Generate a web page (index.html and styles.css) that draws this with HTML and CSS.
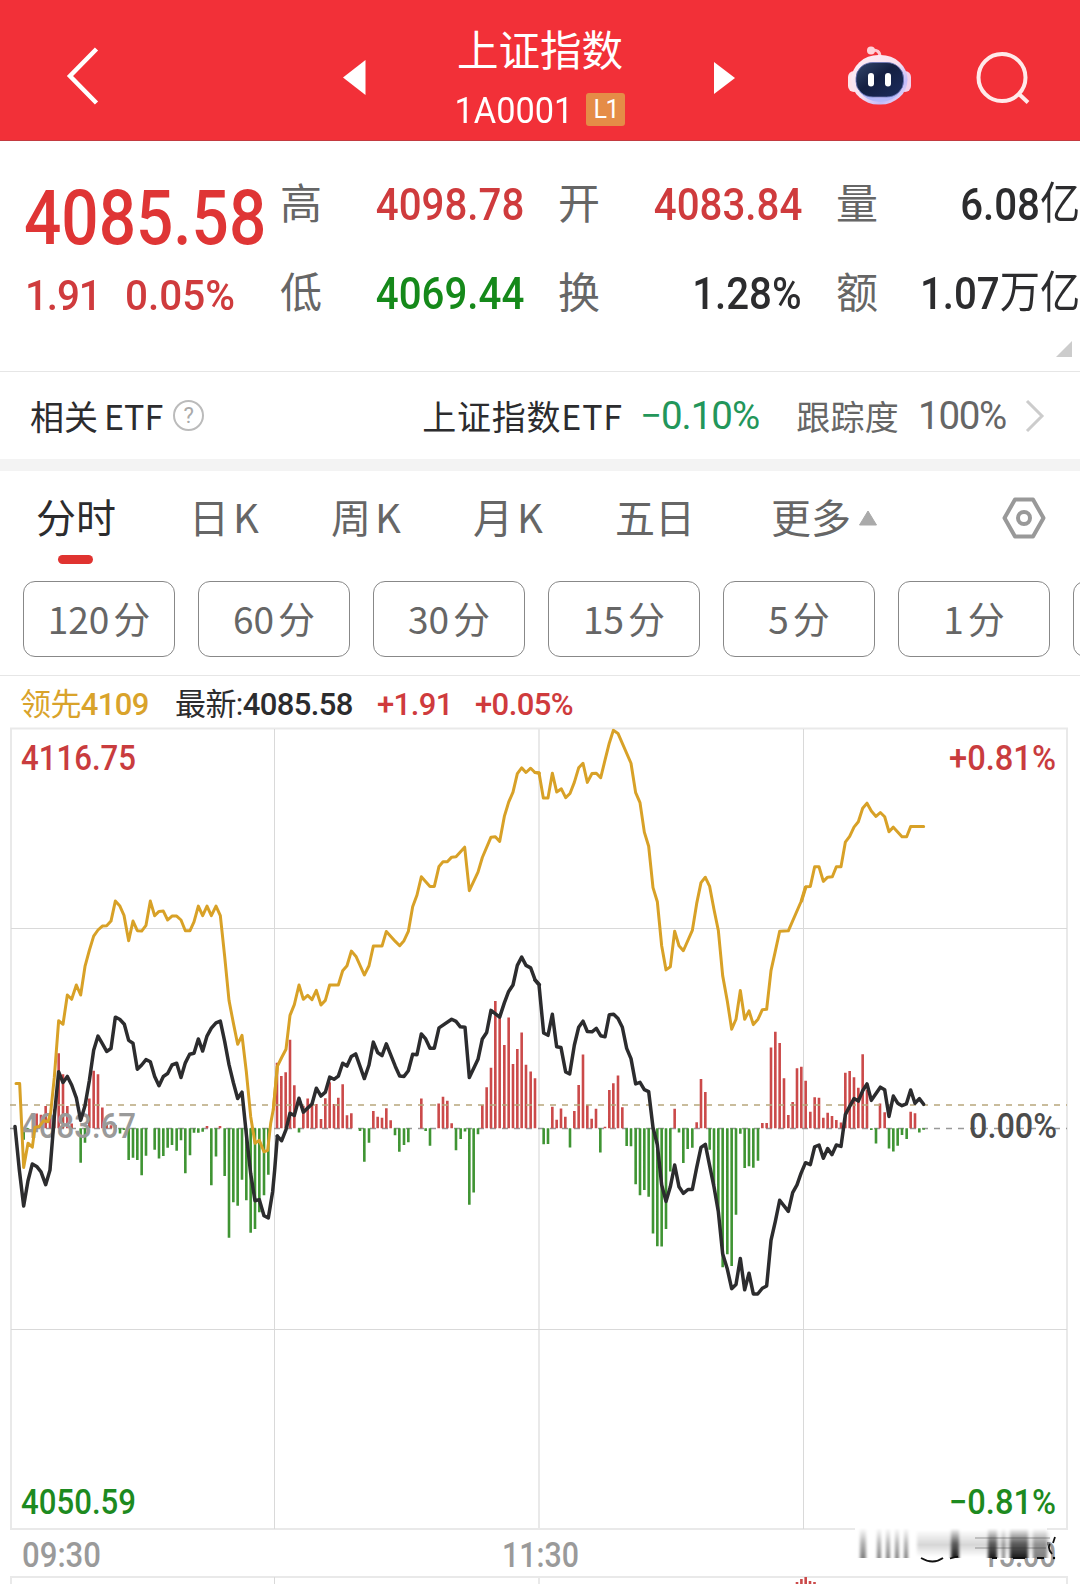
FILE: index.html
```html
<!DOCTYPE html>
<html lang="zh-CN">
<head>
<meta charset="utf-8">
<title>上证指数</title>
<link rel="stylesheet" href="styles.css">
</head>
<body>
<div class="app">
<header class="topbar">
  <svg class="back" width="36" height="60" viewBox="0 0 36 60"><path d="M30.500 3 4 30 30.500 57"/></svg>
  <svg class="prev" width="24" height="36" viewBox="0 0 24 36"><path d="M1 17.500 23.500 0V35Z"/></svg>
  <div class="heading">
    <h1>上证指数</h1>
    <div class="code"><span class="num">1A0001</span><span class="badge">L1</span></div>
  </div>
  <svg class="next" width="22" height="34" viewBox="0 0 22 34"><path d="M0 1 21 17 0 33Z"/></svg>
  <svg class="robot" width="66" height="62" viewBox="0 0 66 62">
    <defs>
      <linearGradient id="shell" x1="0" y1="0" x2="1" y2="1"><stop offset="0" stop-color="#fff0f5"/><stop offset=".5" stop-color="#f8e0ef"/><stop offset=".75" stop-color="#c3bbfa"/><stop offset="1" stop-color="#ffe6f0"/></linearGradient>
      <linearGradient id="visor" x1="0" y1="0" x2="1" y2="1"><stop offset="0" stop-color="#34486c"/><stop offset=".45" stop-color="#141f42"/><stop offset="1" stop-color="#1c2c5e"/></linearGradient>
    </defs>
    <path d="M24 5q9-1 9 7" fill="none" stroke="#ffc9d2" stroke-width="3"/>
    <circle cx="24" cy="5.500" r="4" fill="#ffd3da"/>
    <rect x="1" y="26" width="12" height="21" rx="6" fill="#ffe3ea"/>
    <rect x="52" y="26" width="12" height="21" rx="6" fill="#f3cfea"/>
    <rect x="4.500" y="10" width="56" height="49.500" rx="27" ry="24.500" fill="url(#shell)"/>
    <path d="M12 46q8 11 21 11t21-11q-9 7-21 7T12 46Z" fill="#b4b9fa"/>
    <rect x="9" y="17.500" width="47.500" height="34.500" rx="17" ry="15.500" fill="url(#visor)" stroke="#6a74b8" stroke-width=".8"/>
    <rect x="21" y="28" width="6" height="13.500" rx="3" fill="#fff"/>
    <rect x="38" y="28" width="6" height="13.500" rx="3" fill="#fff"/>
  </svg>
  <svg class="search" width="56" height="56" viewBox="0 0 56 56"><circle cx="27" cy="26.500" r="23.500"/><path d="M44 43 53 51.500"/></svg>
</header>

<section class="quote">
  <div class="price">
    <div class="last num up">4085.58</div>
    <div class="change num up"><span>1.91</span><span>0.05%</span></div>
  </div>
  <dl class="stats">
    <div><dt>高</dt><dd class="num up">4098.78</dd></div>
    <div><dt>开</dt><dd class="num up">4083.84</dd></div>
    <div><dt>量</dt><dd class="num">6.08<b class="cn">亿</b></dd></div>
    <div><dt>低</dt><dd class="num down">4069.44</dd></div>
    <div><dt>换</dt><dd class="num">1.28%</dd></div>
    <div><dt>额</dt><dd class="num">1.07<b class="cn">万亿</b></dd></div>
  </dl>
  <i class="corner"></i>
</section>

<section class="etf">
  <span class="etf-title">相关<b>ETF</b></span>
  <span class="help">?</span>
  <span class="etf-name">上证指数ETF</span>
  <span class="etf-rate num">−0.10%</span>
  <span class="track">跟踪度</span>
  <span class="track-rate num">100%</span>
  <svg class="more" width="20" height="34" viewBox="0 0 20 34"><path d="M2 2 17 17 2 32"/></svg>
</section>

<nav class="tabs">
  <span class="tab active">分时</span>
  <span class="tab">日<b>K</b></span>
  <span class="tab">周<b>K</b></span>
  <span class="tab">月<b>K</b></span>
  <span class="tab">五日</span>
  <span class="tab expand">更多<svg width="20" height="17" viewBox="0 0 20 17"><path d="M10 2 18.500 16H1.500Z" fill="#aaa" stroke="#aaa" stroke-linejoin="round"/></svg></span>
  <svg class="gear" width="44" height="42" viewBox="0 0 44 42"><path d="M13 2.500H31L41.500 21 31 39.500H13L2.500 21Z"/><circle cx="22" cy="21" r="6"/></svg>
</nav>

<div class="periods">
  <span>120<b>分</b></span><span>60<b>分</b></span><span>30<b>分</b></span><span>15<b>分</b></span><span>5<b>分</b></span><span>1<b>分</b></span><span></span>
</div>

<div class="legend num"><span class="lead"><b class="cn">领先</b>4109</span><span class="newest"><b class="cn">最新:</b>4085.58</span><span class="up">+1.91</span><span class="up">+0.05%</span></div>

<svg class="chart" width="1080" height="864" viewBox="0 720 1080 864">
  <defs>
    <linearGradient id="fade" x1="0" y1="0" x2="0" y2="1"><stop offset="0" stop-color="#000" stop-opacity="0"/><stop offset=".5" stop-color="#000" stop-opacity=".3"/><stop offset="1" stop-color="#000" stop-opacity=".5"/></linearGradient>
    <linearGradient id="dark" x1="0" y1="0" x2="0" y2="1"><stop offset="0" stop-color="#000" stop-opacity="0"/><stop offset=".5" stop-color="#000" stop-opacity=".55"/><stop offset="1" stop-color="#000" stop-opacity=".9"/></linearGradient>
    <linearGradient id="haze" x1="0" y1="0" x2="0" y2="1"><stop offset="0" stop-color="#000" stop-opacity="0"/><stop offset=".55" stop-color="#000" stop-opacity=".16"/><stop offset="1" stop-color="#000" stop-opacity="0"/></linearGradient>
    <filter id="soft" x="-20%" y="-20%" width="140%" height="140%"><feGaussianBlur stdDeviation="1.4 .5"/></filter>
  </defs>
  <g class="frame">
    <path d="M11 728.500H1067V1529H11ZM539 728V1529M11 1584V1577H1067V1584M539 1577V1584"/>
    <path class="fine" d="M11 928.500H1067M11 1329.500H1067M274.500 729V1529M803.500 729V1529M274.500 1577V1584"/>
  </g>
  <path class="dash base" d="M10 1128.500H1067"/>
  <g class="bars red">
    <path transform="translate(0 720) scale(.333333 .357143)" d="M110 1143V1102M123 1143V1105M137 1143V1081M150 1143V1110M163 1143V1090M176 1143V933M189 1143V992M202 1143V1081M215 1143V1130M268 1143V1060M281 1143V982M294 1143V992M307 1143V1085M320 1143V1130M333 1143V1135M346 1143V1134M621 1143V1137M660 1143V1137"/>
    <path transform="translate(270 720) scale(.333333 .357143)" d="M21 1143V960M34 1143V997M47 1143V986M60 1143V895M73 1143V1023M100 1143V1080M113 1143V1060M126 1143V1072M139 1143V1075M153 1143V1117M166 1143V1059M179 1143V1014M192 1143V1075M205 1143V1058M218 1143V1020M231 1143V1107M244 1143V1101M310 1143V1095M323 1143V1111M336 1143V1114M349 1143V1087M362 1143V1121M454 1143V1060M506 1143V1074M519 1143V1055M532 1143V1066M545 1143V1129M637 1143V1078M650 1143V1028M663 1143V974M676 1143V787M689 1143V825M703 1143V910M716 1143V833M729 1143V963M742 1143V921M755 1143V875M768 1143V965M782 1143V984M795 1143V1003"/>
    <path transform="translate(530 720) scale(.333333 .382653)" d="M67 1067V1011M80 1067V1045M93 1067V1015M106 1067V1037M133 1067V1022M146 1067V954M159 1067V874M172 1067V1006M185 1067V1042M198 1067V1016M225 1067V1063M238 1067V967M250 1067V949M264 1067V929M277 1067V1012M434 1067V1016M500 1067V1051M513 1067V938M526 1067V972M697 1067V1053M710 1067V1053M723 1067V856M736 1067V815M749 1067V844M762 1067V936M775 1067V1032M788 1067V998M801 1067V910M814 1067V906M827 1067V943"/>
    <path transform="translate(790 720) scale(.333333 .357143)" d="M61 1143V1097M74 1143V1056M87 1143V1058M100 1143V1114M113 1143V1100M126 1143V1109M139 1143V1120M153 1143V1127M166 1143V988M179 1143V983M192 1143V1000M205 1143V1030M218 1143V936M231 1143V1035M270 1143V1074M284 1143V1098M362 1143V1097M375 1143V1101"/>
    <path d="M797 1584V1582M801.400 1584V1579M805.700 1584V1577M810 1584V1581M814.500 1584V1582"/>
  </g>
  <g class="bars green">
    <path transform="translate(0 720) scale(.333333 .357143)" d="M71 1143V1175M84 1143V1150M242 1143V1240M255 1143V1184M360 1143V1158M372 1143V1148M386 1143V1232M399 1143V1226M412 1143V1232M425 1143V1275M438 1143V1220M464 1143V1203M477 1143V1228M490 1143V1221M503 1143V1198M516 1143V1190M530 1143V1206M543 1143V1177M556 1143V1269M570 1143V1219M582 1143V1156M595 1143V1156M608 1143V1153M634 1143V1303M648 1143V1222M674 1143V1277M687 1143V1450M700 1143V1350M713 1143V1360M726 1143V1287M739 1143V1345M752 1143V1436M765 1143V1425M778 1143V1378M792 1143V1331M805 1143V1273"/>
    <path transform="translate(270 720) scale(.333333 .357143)" d="M87 1143V1155M270 1143V1151M283 1143V1237M297 1143V1184M375 1143V1163M388 1143V1209M402 1143V1190M415 1143V1182M467 1143V1151M480 1143V1192M558 1143V1205M572 1143V1173M585 1143V1152M598 1143V1357M611 1143V1323M624 1143V1160M821 1143V1188M834 1143V1187"/>
    <path transform="translate(530 720) scale(.333333 .382653)" d="M120 1067V1117M211 1067V1130M290 1067V1113M303 1067V1114M317 1067V1213M330 1067V1242M343 1067V1228M356 1067V1246M369 1067V1342M382 1067V1375M395 1067V1376M408 1067V1330M421 1067V1180M447 1067V1078M460 1067V1158M473 1067V1121M487 1067V1118M539 1067V1123M552 1067V1215M565 1067V1285M578 1067V1430M592 1067V1396M605 1067V1427M618 1067V1293M631 1067V1081M644 1067V1171M657 1067V1166M670 1067V1170M684 1067V1152"/>
    <path transform="translate(790 720) scale(.333333 .357143)" d="M244 1143V1148M258 1143V1186M297 1143V1200M310 1143V1208M323 1143V1192M336 1143V1162M350 1143V1173M388 1143V1155M401 1143V1147"/>
  </g>
  <path class="dash last-line" d="M10 1105H1067"/>
  <g class="labels">
    <text class="red" x="21" y="770" textLength="115" lengthAdjust="spacingAndGlyphs">4116.75</text>
    <text class="red" x="949" y="770" textLength="107" lengthAdjust="spacingAndGlyphs">+0.81%</text>
    <text class="mid" x="21" y="1138" textLength="115" lengthAdjust="spacingAndGlyphs">4083.67</text>
    <text class="zero" x="969" y="1138" textLength="88" lengthAdjust="spacingAndGlyphs">0.00%</text>
    <text class="green" x="21" y="1514" textLength="115" lengthAdjust="spacingAndGlyphs">4050.59</text>
    <text class="green" x="949" y="1514" textLength="107" lengthAdjust="spacingAndGlyphs">−0.81%</text>
    <text class="time" x="22" y="1567" textLength="79" lengthAdjust="spacingAndGlyphs">09:30</text>
    <text class="time" x="502" y="1567" textLength="77" lengthAdjust="spacingAndGlyphs">11:30</text>
    <text class="time" x="982" y="1567" textLength="74" lengthAdjust="spacingAndGlyphs">15:00</text>
  </g>
  <g class="line lead-line">
    <polyline transform="translate(0 720) scale(.333333 .357143)" points="48,1018 59,1018 71,1253 84,1185 97,1196 105,1140 118,1138 131,1122 144,1125 152,1100 163,1000 176,842 189,852 202,770 215,782 229,742 242,770 255,690 268,645 281,605 294,588 307,577 320,576 333,563 346,507 359,520 372,547 386,618 399,563 412,590 425,591 438,575 451,507 464,548 477,536 490,535 503,560 516,549 530,549 543,560 556,590 570,590 582,565 595,521 608,548 621,521 634,548 648,521 661,548 674,662 687,785 700,848 713,908 726,883 739,985 752,1110 765,1185 778,1177 792,1209 803,1205 812,1130 820,1090 832,970"/>
    <polyline transform="translate(270 720) scale(.333333 .357143)" points="10,1090 22,970 35,945 48,922 60,827 73,797 87,742 100,782 113,771 126,783 139,757 153,798 166,785 179,742 192,742 205,742 218,702 231,688 244,647 258,662 283,714 297,688 310,633 336,633 349,592 376,620 389,632 402,618 415,592 428,523 441,490 454,439 480,466 493,466 507,410 519,397 532,397 545,384 558,383 584,356 598,478 624,426 637,385 663,328 676,327 689,340 703,270 716,230 729,202 742,150 755,134 768,147 782,135 795,147 808,149"/>
    <polyline transform="translate(530 720) scale(.333333 .382653)" points="15,137 27,138 40,204 54,204 67,139 80,188 94,180 107,203 120,192 133,163 146,125 159,113 172,163 186,140 199,139 212,151 225,105 238,60 250,27 264,35 303,113 317,190 330,216 343,293 356,330 369,438 382,475 395,590 408,653 421,645 434,552 447,590 460,603 487,550 500,480 513,425 526,411 539,435 552,495 565,550 578,668 592,735 605,808 618,782 631,707 644,782 657,760 670,796 684,782 697,757 710,756 723,655 736,604 749,552 775,551 813,475 826,437"/>
    <polyline transform="translate(790 720) scale(.333333 .357143)" points="35,507 48,467 61,466 74,411 87,411 100,452 113,440 127,439 139,411 153,411 166,342 179,326 192,300 205,285 218,247 231,233 244,255 258,270 271,259 284,271 297,313 310,300 336,327 350,327 362,298 401,298"/>
  </g>
  <g class="line price-line">
    <polyline transform="translate(0 720) scale(.333333 .357143)" points="45,1138 58,1260 71,1361 84,1290 97,1243 110,1250 123,1265 137,1301 150,1260 163,1110 176,985 189,1015 202,998 215,1022 229,1058 242,1121 255,1080 268,1010 281,925 294,885 307,906 320,928 333,920 346,832 359,838 373,852 386,897 399,905 412,978 425,966 438,951 451,957 464,998 477,1024 490,998 503,990 516,966 530,961 543,1001 556,960 569,936 582,933 595,893 608,927 621,885 634,863 648,848 661,843 674,900 687,965 700,1015 713,1060 726,1042 739,1160 752,1270 765,1346 778,1343 792,1388 805,1394 818,1320 824,1260 832,1165"/>
    <polyline transform="translate(270 720) scale(.333333 .357143)" points="22,1165 35,1178 48,1147 60,1101 73,1107 87,1059 100,1098 126,1075 139,1031 153,1053 166,1042 179,1000 192,1006 205,997 218,961 231,969 244,942 257,935 283,1004 297,966 310,902 323,931 336,940 349,907 376,970 389,997 402,998 415,982 428,936 441,937 454,879 467,893 480,919 493,919 507,862 545,838 558,844 571,859 585,860 598,1001 624,950 637,893 650,875 663,813 689,832 703,792 716,760 729,742 742,687 755,664 768,687 782,694 795,727 808,741"/>
    <polyline transform="translate(530 720) scale(.333333 .382653)" points="15,680 27,692 41,818 54,824 67,769 80,854 93,856 107,920 119,925 133,850 146,803 159,787 172,814 186,815 199,806 212,825 225,828 238,770 251,769 264,780 277,803 290,858 303,885 317,951 330,947 343,966 356,971 369,1065 382,1110 395,1215 408,1258 421,1220 434,1163 447,1220 460,1237 474,1227 487,1227 500,1170 513,1117 526,1109 539,1165 552,1220 565,1285 578,1395 592,1435 605,1486 618,1475 631,1407 644,1489 657,1446 670,1500 683,1500 697,1485 710,1479 723,1360 736,1310 749,1255 775,1284 788,1235 801,1215 813,1185 826,1158"/>
    <polyline transform="translate(790 720) scale(.333333 .357143)" points="48,1240 61,1245 74,1195 87,1190 100,1227 113,1200 126,1217 139,1190 153,1194 166,1105 179,1082 192,1060 205,1067 218,1038 231,1019 244,1065 271,1028 284,1035 297,1110 310,1053 323,1073 336,1080 349,1075 362,1036 375,1073 388,1060 401,1076"/>
  </g>
  <g class="smear">
    <rect x="855" y="1527" width="192" height="31" fill="#fff"/>
    <g filter="url(#soft)">
      <path fill="url(#fade)" d="M860 1528h6v30h-6ZM877 1528h4v30h-4ZM886 1528h4v30h-4ZM895 1528h4v30h-4ZM904 1528h4v30h-4ZM1002 1528h3v30h-3ZM1033 1528h14v30h-14Z"/>
      <path fill="url(#dark)" d="M951 1528h8v30h-8ZM988 1528h9v30h-9ZM1010 1528h18v30h-18Z"/>
      <path fill="url(#haze)" d="M917 1530H1050V1557H917Z"/>
    </g>
    <path d="M975 1538H1050M975 1548H1046" fill="none" stroke="#333" stroke-width="1" stroke-opacity=".45"/>
    <path d="M921 1558q12 7 22 0M950 1558.500l8-2M992 1558h5M1013 1558h12M1037 1558h7M1053 1543l2-6M1050 1544q-3 4 2 10" fill="none" stroke="#111" stroke-width="1.800"/>
    <circle cx="1054" cy="1558" r="1.200"/>
  </g>
</svg>
</div>
</body>
</html>
```
FILE: styles.css
```css
* { box-sizing: border-box; }
body { margin: 0; background: #fff; }
h1, dl, dd, dt { margin: 0; font-weight: 400; }
b { font-weight: inherit; }
.app { width: 1080px; height: 1584px; overflow: hidden; font-family: "Noto Sans CJK SC", sans-serif; color: #2c2c2e; display: flex; flex-direction: column; }
.app > * { flex: none; }
.num { font-family: Roboto, "Noto Sans CJK SC", sans-serif; font-weight: 500; }
.cn { font-weight: 400; }
.up { color: #cf3b3d; }
.down { color: #15891a; }

.topbar { height: 141px; background: #f23038; border-bottom: 1px solid #c33a40; display: flex; align-items: flex-start; color: #fff; }
.topbar svg { flex: none; fill: #fff; }
.topbar .back { margin: 46px 0 0 66px; fill: none; stroke: #fff; stroke-width: 4.5; }
.topbar .prev { margin: 60px 0 0 240px; }
.heading { width: 348px; text-align: center; padding-top: 23px; }
.heading h1 { font-size: 41.5px; line-height: 50px; }
.code { display: flex; justify-content: center; gap: 13px; margin-top: 20px; height: 33px; line-height: 35px; }
.code .num { font-size: 36.5px; font-weight: 400; transform: scaleX(.94); transform-origin: right; margin-left: -8px; }
.badge { width: 39px; height: 33px; border-radius: 3px; background: #e58c47; font: 400 25px/34px Roboto, sans-serif; letter-spacing: -1.5px; }
.topbar .next { margin-top: 61px; }
.topbar .robot { margin: 45px 0 0 111px; fill: none; }
.topbar .search { margin: 51px 0 0 62px; fill: none; stroke: #ffeaea; stroke-width: 4; }

.quote { height: 230px; padding: 18px 0 0 24px; display: flex; position: relative; }
.price { width: 257px; padding-top: 1px; }
.last { width: 257px; font-size: 75.5px; line-height: 117px; color: #df3535; transform: scaleX(.87); transform-origin: left; }
.change { font-size: 43px; line-height: 37px; display: flex; gap: 26px; padding-left: 1px; letter-spacing: -1.2px; transform: scaleX(.94); transform-origin: left; }
.change span + span { letter-spacing: 0; }
.stats { width: 799px; display: grid; grid-template-columns: repeat(3, 243px); gap: 0 35px; grid-auto-rows: 89px; }
.stats div { display: flex; justify-content: space-between; white-space: nowrap; }
.stats dt { font-size: 42px; line-height: 84px; color: #666; margin-left: -1px; }
.stats dd { font-size: 44px; line-height: 92px; transform: scaleX(.915); transform-origin: right; }
.stats .cn { line-height: 1; position: relative; top: -1px; }
.corner { position: absolute; right: 8px; bottom: 14px; border: 8px solid; border-color: transparent #ccc #ccc transparent; }

.etf { height: 88px; border-top: 1px solid #e6e6e6; display: flex; align-items: center; font-size: 34px; line-height: 86px; white-space: nowrap; padding-left: 30px; }
.etf-title b { margin-left: 6px; }
.help { width: 31px; height: 31px; border: 2px solid #bbb; border-radius: 50%; margin-left: 10px; font: 22px/27px Roboto, sans-serif; color: #aaa; text-align: center; }
.etf-name { margin-left: auto; letter-spacing: .8px; }
.etf-rate { margin-left: 17px; color: #23965a; }
.etf .num { font-size: 38.5px; font-weight: 400; letter-spacing: -1px; }
.track { margin-left: 37px; color: #666; letter-spacing: .3px; }
.etf .track-rate { margin-left: 19px; color: #666; letter-spacing: -1.3px; }
.more { margin: 0 35px 0 19px; fill: none; stroke: #ccc; stroke-width: 3; }

.tabs { height: 122px; border-top: 12px solid #f3f3f3; display: flex; padding: 18px 0 0 36px; font-size: 40px; line-height: 54px; color: #666; position: relative; }
.tab { width: 142px; padding-left: 10px; white-space: nowrap; }
.tab b { margin-left: 4px; }
.tab.active { width: 143px; padding-left: 0; color: #2c2c2e; }
.tab.active::after { content: ""; display: block; width: 35px; height: 9px; margin: 12px 0 0 22px; border-radius: 5px; background: #e03330; }
.tab.expand { padding-left: 24px; }
.tab svg { margin-left: 7px; vertical-align: 7px; }
.gear { position: absolute; left: 1002px; top: 26px; fill: none; stroke: #999; stroke-width: 4; stroke-linejoin: round; }

.periods { height: 95px; border-bottom: 1px solid #e6e6e6; display: flex; gap: 23px; padding-left: 23px; overflow: hidden; }
.periods span { flex: none; width: 152px; height: 76px; border: 1px solid #888; border-radius: 12px; text-align: center; font-size: 37px; line-height: 73px; color: #666; }
.periods b { margin-left: 4px; }

.legend { height: 44px; padding: 3px 0 0 20px; display: flex; font-size: 31px; line-height: 52px; white-space: nowrap; letter-spacing: -.6px; }
.lead { color: #d9a32b; width: 155px; }
.newest { width: 202px; }
.legend .up { width: 98px; }

.chart { display: block; }
.frame path { fill: none; stroke: #e9e9e9; stroke-width: 2; }
.frame .fine { stroke: #d9d9d9; stroke-width: 1; }
.dash { fill: none; stroke-dasharray: 6 6; stroke-width: 1.6; }
.base { stroke: #999; }
.last-line { stroke: #b8a67c; }
.bars path { fill: none; stroke-width: 2.6; vector-effect: non-scaling-stroke; }
.bars.red path { stroke: #cb4a4a; }
.bars.green path { stroke: #3f9433; }
.line polyline { fill: none; stroke-linejoin: round; stroke-linecap: round; vector-effect: non-scaling-stroke; }
.lead-line polyline { stroke: #d8a127; stroke-width: 3; }
.price-line polyline { stroke: #2c2c2e; stroke-width: 3.5; }
.labels text { font: 500 35px Roboto, sans-serif; }
.labels .red { fill: #c93c3e; }
.labels .green { fill: #1d8a20; }
.labels .mid, .labels .time { fill: #9a9a9a; }
.labels .zero { fill: #4c4c4c; }
```
